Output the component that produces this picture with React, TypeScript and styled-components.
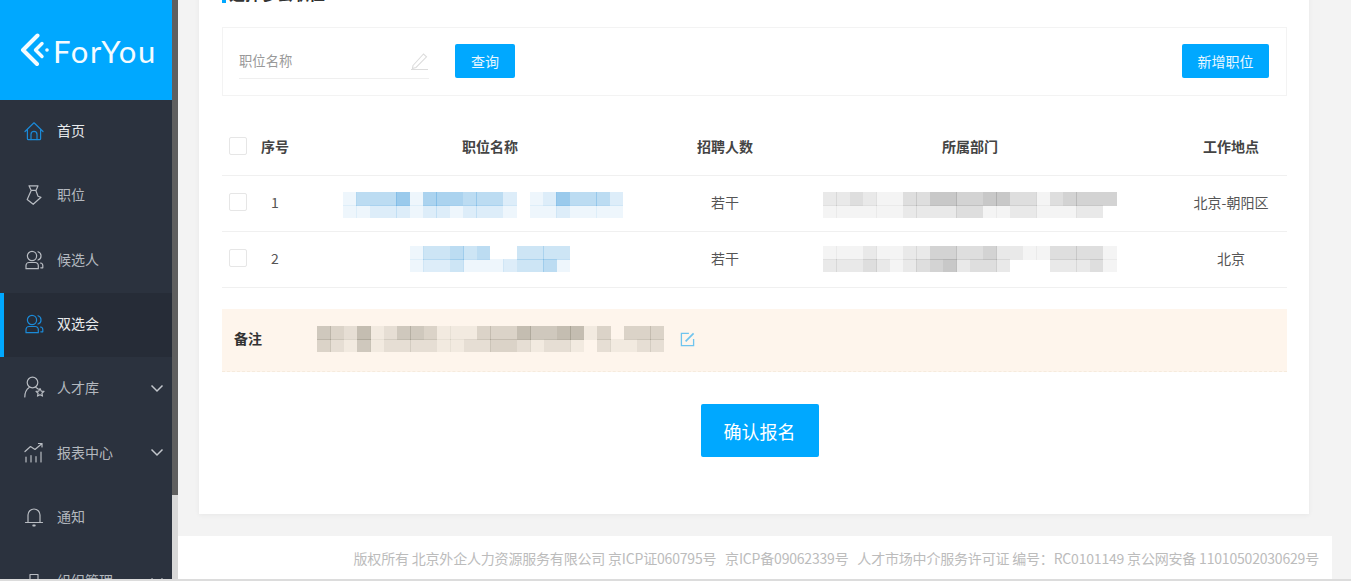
import React from "react";
import styled, { createGlobalStyle } from "styled-components";

const CJK = `"Noto Sans CJK SC", "Noto Sans", sans-serif`;
const BLUE = "#00a8ff";

const Global = createGlobalStyle`
  html, body { margin: 0; height: 100%; overflow: hidden; background: #f3f3f3; }
  body { font-family: ${CJK}; font-size: 14px; color: #555; }
  * { box-sizing: border-box; }
`;

const Shell = styled.div`
  display: flex;
  flex-direction: column;
  height: 581px;
  overflow: hidden;
`;
const Body = styled.div`
  display: flex;
  height: 579px;
  overflow: hidden;
`;
const BottomEdge = styled.div`
  height: 2px;
  background: #dcdcdc;
`;
const Aside = styled.aside`
  width: 172px;
  flex: none;
  background: #2b323e;
  overflow: hidden;
`;
const LogoBar = styled.div`
  height: 100px;
  background: ${BLUE};
  display: flex;
  align-items: center;
  padding-left: 20px;
  gap: 4px;
`;
const LogoText = styled.span`
  font-family: Lato, sans-serif;
  font-size: 31px;
  font-weight: 400;
  letter-spacing: 1.6px;
  color: #f4fbff;
  line-height: 1;
  margin-top: 2px;
`;
const MenuItem = styled.div<{ $active?: boolean; $bright?: boolean }>`
  height: 64.33px;
  display: flex;
  align-items: center;
  padding: 0 0 2px 24px;
  gap: 13px;
  font-size: 14px;
  color: ${(p) => (p.$bright ? "#e8eaec" : "#b3b8be")};
  background: ${(p) => (p.$active ? "#262c37" : "transparent")};
  box-shadow: ${(p) => (p.$active ? `inset 4px 0 0 ${BLUE}` : "none")};
  svg.menu-icon {
    flex: none;
    width: 20px;
    height: 20px;
    fill: none;
    stroke: ${(p) => (p.$bright ? "#1b8ad8" : "#b8bcc2")};
    stroke-width: 1.2;
    stroke-linecap: round;
    stroke-linejoin: round;
  }
`;
const MenuLabel = styled.span`
  flex: 1;
  margin-top: -2px;
`;
const Chevron = styled.svg`
  width: 14px;
  height: 9px;
  margin-right: 8px;
  fill: none;
  stroke: #c3c7cc;
  stroke-width: 1.5;
`;
const Track = styled.div`
  width: 6px;
  flex: none;
  background: #d8d8d8;
`;
const Thumb = styled.div`
  height: 495px;
  background: #5f5f5f;
`;
const Main = styled.main`
  flex: 1;
  min-width: 0;
  display: flex;
  flex-direction: column;
`;
const Card = styled.section`
  flex: none;
  margin: -40px 42px 0 21px;
  padding: 23px 22px 57px 23px;
  background: #fff;
  box-shadow: 0 1px 5px rgba(0, 0, 0, 0.05);
`;
const Title = styled.h2`
  margin: 0 0 22px;
  height: 22px;
  display: flex;
  align-items: center;
  gap: 3px;
  font-size: 16px;
  line-height: 22px;
  font-weight: 700;
  color: #333;
  &::before {
    content: "";
    width: 4px;
    height: 18px;
    background: ${BLUE};
  }
`;
const TitleText = styled.span`
  margin-top: -3px;
`;
const SearchPanel = styled.div`
  height: 69px;
  border: 1px solid #f3f3f3;
  display: flex;
  align-items: center;
  padding: 0 17px 1px 16px;
`;
const Field = styled.div`
  width: 190px;
  height: 35px;
  border-bottom: 1px solid #efefef;
  display: flex;
  align-items: center;
  justify-content: space-between;
  font-size: 13.33px;
  color: #999;
`;
const PenIcon = styled.svg`
  width: 19px;
  height: 19px;
  fill: none;
  stroke: #dcdcdc;
  stroke-width: 1.1;
`;
const SmallButton = styled.button<{ $w: number }>`
  height: 34px;
  padding: 0;
  width: ${(p) => p.$w}px;
  border: 0;
  border-radius: 2px;
  background: ${BLUE};
  color: #e9f7ff;
  font: 14px ${CJK};
`;
const Query = styled(SmallButton)`
  margin-left: 26px;
`;
const Add = styled(SmallButton)`
  margin-left: auto;
`;
const Table = styled.div`
  margin-top: 22px;
`;
const Row = styled.div<{ $head?: boolean }>`
  display: grid;
  grid-template-columns: 73px 390px 80px 410px 112px;
  align-items: center;
  height: ${(p) => (p.$head ? 58 : 56)}px;
  padding-bottom: ${(p) => (p.$head ? 2 : 3)}px;
  border-bottom: 1px solid #f0f0f0;
  font-weight: ${(p) => (p.$head ? 700 : 400)};
  color: ${(p) => (p.$head ? "#444" : "#555")};
`;
const Cell = styled.div`
  display: flex;
  justify-content: center;
  align-items: center;
  white-space: nowrap;
`;
const MosaicCell = styled(Cell)<{ $drop: number }>`
  padding-top: ${(p) => p.$drop}px;
`;
const FirstCell = styled.div`
  display: flex;
  align-items: center;
  padding-left: 7px;
  gap: 14px;
`;
const Check = styled.span`
  width: 18px;
  height: 18px;
  flex: none;
  border: 1px solid #e6e6e6;
  border-radius: 2px;
  background: #fff;
`;
const Seq = styled.span`
  width: 28px;
  text-align: center;
`;
const Note = styled.div`
  margin-top: 21px;
  height: 63px;
  padding-bottom: 2px;
  background: #fef5ec;
  border-bottom: 1px dashed #f6ebdd;
  display: flex;
  align-items: center;
`;
const NoteLabel = styled.strong`
  width: 95px;
  padding-left: 12px;
  font-size: 14px;
  color: #333;
  margin-top: -2px;
`;
const EditIcon = styled.svg`
  width: 15px;
  height: 15px;
  margin-left: 16px;
  fill: none;
  stroke: #6fc4ee;
  stroke-width: 1.4;
`;
const Actions = styled.div`
  margin-top: 32px;
  display: flex;
  justify-content: center;
`;
const Confirm = styled.button`
  width: 118px;
  height: 53px;
  margin-left: 10px;
  border: 0;
  border-radius: 2px;
  background: ${BLUE};
  color: #fff;
  font: 18px ${CJK};
`;
const Footer = styled.footer`
  flex: none;
  height: 43px;
  margin: 22px 19px 0 0;
  background: #fff;
  display: flex;
  align-items: center;
  justify-content: flex-end;
  padding-right: 13px;
  font-size: 14px;
  color: #bcbcbc;
  white-space: pre;
  letter-spacing: -0.19px;
`;
const MosaicSvg = styled.svg`
  display: block;
  flex: none;
`;

const CELL = 13.33;
function Mosaic({ color, top, bottom }: { color: string; top: string; bottom: string }) {
  const render = (s: string, y: number) =>
    s.split("").map((d, i) => (
      <rect key={`${y}-${i}`} x={i * CELL} y={y} width={CELL + 0.3} height={CELL + 0.3} fill={color} fillOpacity={Number(d) / 9} />
    ));
  return (
    <MosaicSvg width={top.length * CELL} height={CELL * 2} shapeRendering="crispEdges" aria-hidden>
      {render(top, 0)}
      {render(bottom, CELL)}
    </MosaicSvg>
  );
}

const Home = () => (
  <svg className="menu-icon" viewBox="0 0 20 20">
    <path d="M1 10.500 10 1.800l9 8.700M3.400 8.500v9.200a1 1 0 0 0 1 1h11.200a1 1 0 0 0 1-1V8.500" />
    <path d="M7 18.600v-5.200a3 3 0 0 1 6 0v5.200" />
  </svg>
);
const Tie = () => (
  <svg className="menu-icon" viewBox="0 0 20 20">
    <path d="M5 .8h9l-2 4.600H7.200zM7.200 5.400 3.200 14.500l6 4.800 7.800-7-3-1-2.200-5.900" />
  </svg>
);
const People = () => (
  <svg className="menu-icon" viewBox="0 0 20 20">
    <circle cx="8" cy="6" r="4.600" />
    <path d="M2 18.700v-3.200a3 3 0 0 1 3-3h6.300a3 3 0 0 1 3 3v3.200zM14 1.800a4.300 4.300 0 0 1 0 8.200M16.500 13a2.600 2.600 0 0 1 2.300 2.600v2.200h-2" />
  </svg>
);
const PersonStar = () => (
  <svg className="menu-icon" viewBox="0 0 20 20" style={{ overflow: "visible" }}>
    <circle cx="8.500" cy="4.500" r="5.300" />
    <path d="M.8 19c0-5 2.200-8 4.400-9.500M11.800 9.500q1.500.7 2.600 1.700" />
    <path d="m16 10.500 1.200 2.600 2.800.3-2.100 1.900.6 2.800-2.500-1.400-2.500 1.400.6-2.800-2.100-1.900 2.800-.3z" />
  </svg>
);
const Chart = () => (
  <svg className="menu-icon" viewBox="0 0 20 20">
    <path d="M1 8.500 6.500 3.500l4.500 3 7-6M14.500.5H18V4M2 14v5M7 12.500V19M12 13.500V19M17 9v10" />
  </svg>
);
const Bell = () => (
  <svg className="menu-icon" viewBox="0 0 20 20">
    <path d="M4 15.500V8a6 6 0 0 1 12 0v7.500M1.500 15.500h17" />
    <path d="M9.200 18.500h1.600" strokeWidth="1.800" />
  </svg>
);
const Org = () => (
  <svg className="menu-icon" viewBox="0 0 20 20">
    <path d="M6 3.500h8v6H6zM10 9.500v4M3 17v-3.500h14V17" />
  </svg>
);
const Down = () => (
  <Chevron viewBox="0 0 14 9">
    <path d="m1.500 1.500 5.500 5.500 5.500-5.500" />
  </Chevron>
);

const menu: { label: string; icon: React.ReactNode; active?: boolean; bright?: boolean; arrow?: boolean }[] = [
  { label: "首页", icon: <Home />, bright: true },
  { label: "职位", icon: <Tie /> },
  { label: "候选人", icon: <People /> },
  { label: "双选会", icon: <People />, active: true, bright: true },
  { label: "人才库", icon: <PersonStar />, arrow: true },
  { label: "报表中心", icon: <Chart />, arrow: true },
  { label: "通知", icon: <Bell /> },
  { label: "组织管理", icon: <Org />, arrow: true },
];

const HEAD = ["职位名称", "招聘人数", "所属部门", "工作地点"];
const BLUE_M = "#68b0e2";
const GREY_M = "#9c9c9c";
const rows = [
  {
    seq: "1",
    drop: 6,
    nameTop: "1444615554442012644420",
    nameBottom: "1122212212221011211110",
    deptTop: "2232113355445533134444",
    deptBottom: "1111112222331122111220",
    place: "北京-朝阳区",
  },
  {
    seq: "2",
    drop: 2,
    nameTop: "133434003333",
    nameBottom: "122311123341",
    deptTop: "1112112244334221133331",
    deptBottom: "2223212345233200022231",
    place: "北京",
  },
];

export default function App() {
  return (
    <Shell>
      <Global />
      <Body>
        <Aside>
          <LogoBar>
            <svg width="29" height="34" viewBox="0 0 29 34" fill="none" stroke="#f4fbff" strokeWidth="4" strokeLinecap="round" strokeLinejoin="round">
              <path d="M17.500 2.500 3 17l14 14" />
              <path d="M22 10.500 15.500 17l6.500 6.500" strokeWidth="3.400" />
              <circle cx="27" cy="17" r="0.8" strokeWidth="2" />
            </svg>
            <LogoText>ForYou</LogoText>
          </LogoBar>
          {menu.map((m) => (
            <MenuItem key={m.label} $active={m.active} $bright={m.bright}>
              {m.icon}
              <MenuLabel>{m.label}</MenuLabel>
              {m.arrow && <Down />}
            </MenuItem>
          ))}
        </Aside>
        <Track>
          <Thumb />
        </Track>
        <Main>
          <Card>
            <Title>
              <TitleText>选择参会职位</TitleText>
            </Title>
            <SearchPanel>
              <Field>
                职位名称
                <PenIcon viewBox="0 0 19 19">
                  <path d="M3 14.500 13.500 3l3 2.800L6 16.500l-3.500 1zM1 18.500h17" />
                </PenIcon>
              </Field>
              <Query $w={60}>查询</Query>
              <Add $w={87}>新增职位</Add>
            </SearchPanel>
            <Table>
              <Row $head>
                <FirstCell>
                  <Check />
                  <Seq>序号</Seq>
                </FirstCell>
                {HEAD.map((h) => (
                  <Cell key={h}>{h}</Cell>
                ))}
              </Row>
              {rows.map((r) => (
                <Row key={r.seq}>
                  <FirstCell>
                    <Check />
                    <Seq>{r.seq}</Seq>
                  </FirstCell>
                  <MosaicCell $drop={r.drop}>
                    <Mosaic color={BLUE_M} top={r.nameTop} bottom={r.nameBottom} />
                  </MosaicCell>
                  <Cell>若干</Cell>
                  <MosaicCell $drop={r.drop}>
                    <Mosaic color={GREY_M} top={r.deptTop} bottom={r.deptBottom} />
                  </MosaicCell>
                  <Cell>{r.place}</Cell>
                </Row>
              ))}
            </Table>
            <Note>
              <NoteLabel>备注</NoteLabel>
              <Mosaic color="#959082" top="43251244311133354455130333" bottom="32141222211223321221021122" />
              <EditIcon viewBox="0 0 16 16">
                <path d="M14.500 7.500v7h-13v-13h8" />
                <path d="M6 10 14.500 1.500" strokeWidth="1.800" />
              </EditIcon>
            </Note>
            <Actions>
              <Confirm>确认报名</Confirm>
            </Actions>
          </Card>
          <Footer>{"版权所有 北京外企人力资源服务有限公司 京ICP证060795号   京ICP备09062339号   人才市场中介服务许可证 编号：RC0101149 京公网安备 11010502030629号"}</Footer>
        </Main>
      </Body>
      <BottomEdge />
    </Shell>
  );
}
